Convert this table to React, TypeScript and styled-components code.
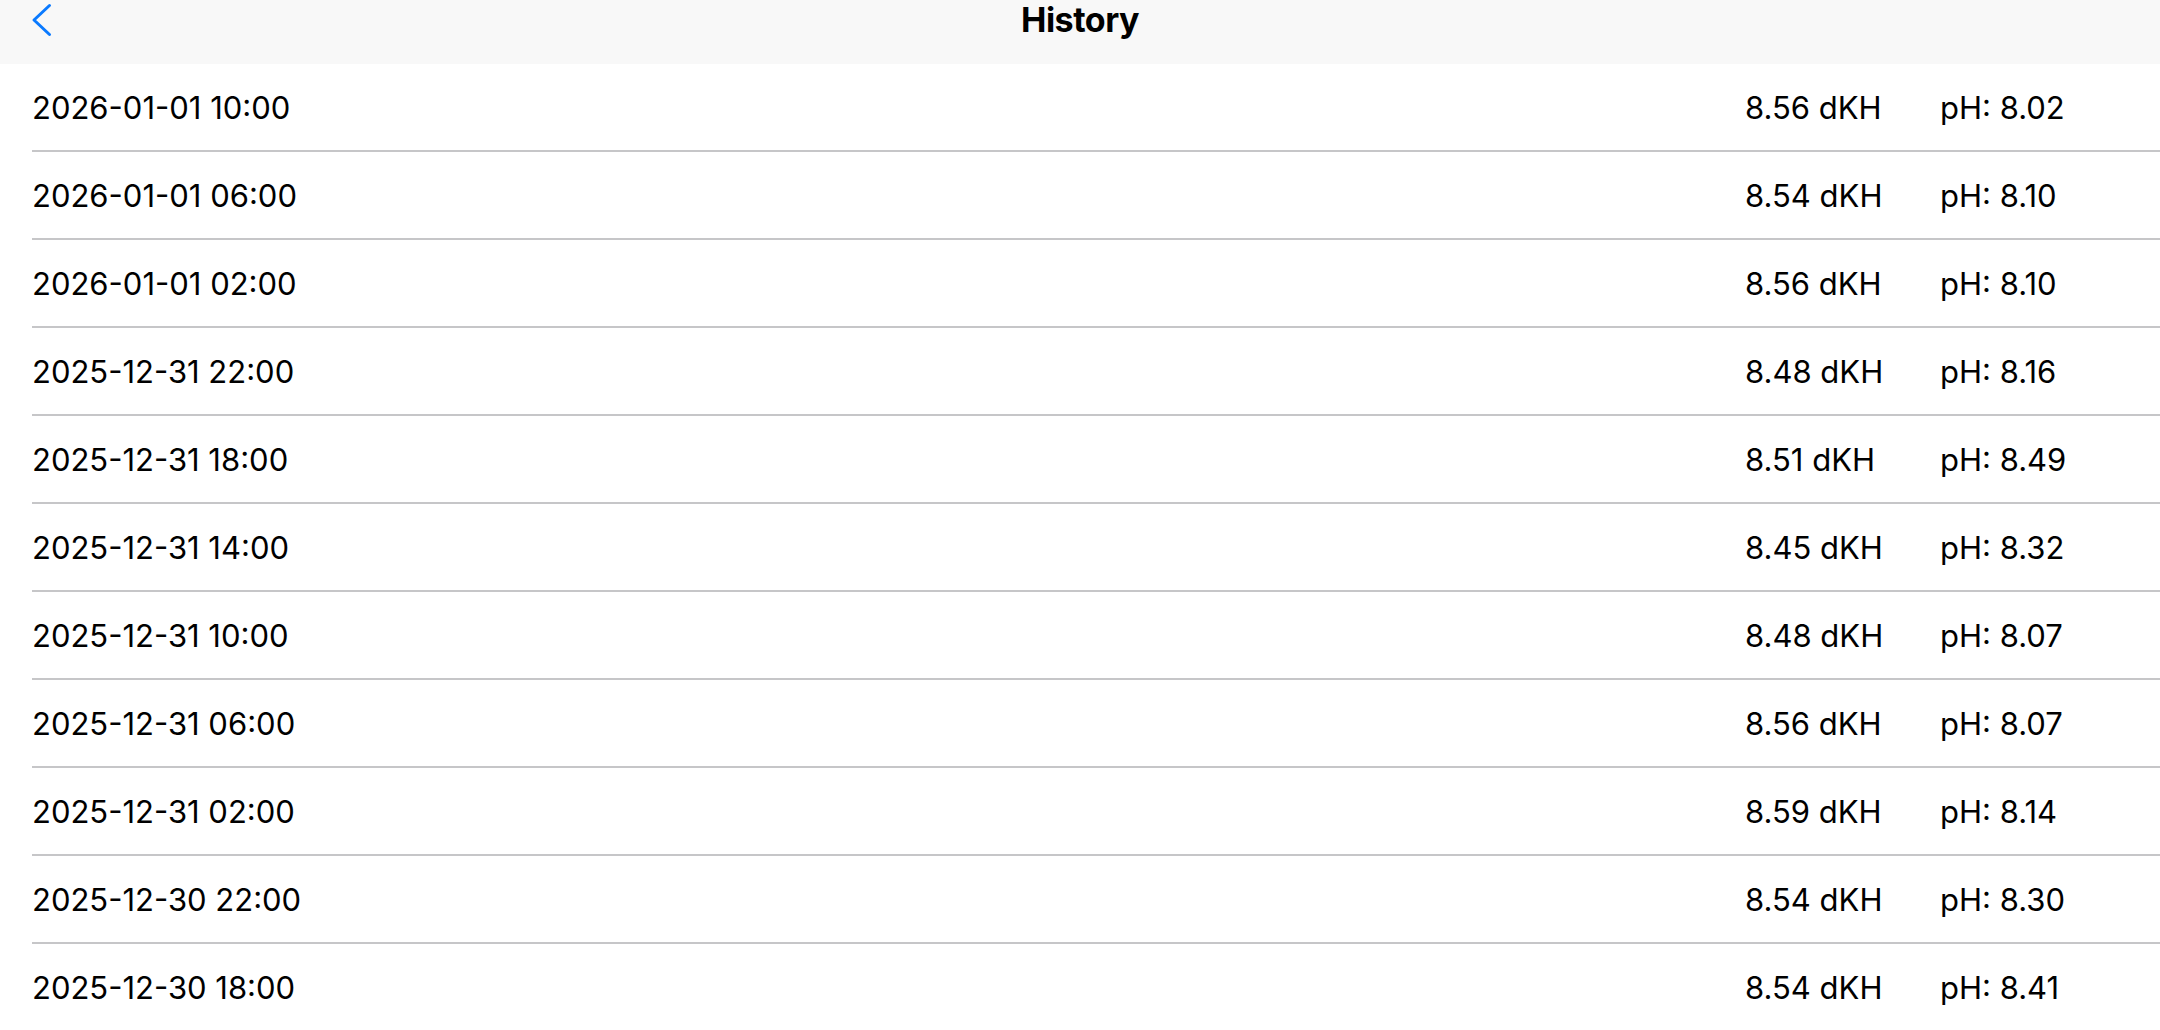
import React from "react";
import styled, { createGlobalStyle } from "styled-components";

const GlobalStyle = createGlobalStyle`
  html, body {
    margin: 0;
    padding: 0;
    background: #ffffff;
  }
  body {
    font-family: Inter, "Liberation Sans", sans-serif;
    color: #000000;
    -webkit-font-smoothing: antialiased;
  }
`;

const Page = styled.div`
  width: 100%;
  min-height: 100vh;
  background: #ffffff;
  overflow: hidden;
`;

const NavBar = styled.header`
  display: grid;
  grid-template-columns: 1fr auto 1fr;
  align-items: start;
  height: 64px;
  background: #f8f8f8;
`;

const BackButton = styled.button`
  justify-self: start;
  display: flex;
  align-items: center;
  margin: 3px 0 0 31px;
  padding: 0;
  border: none;
  background: none;
  color: #0a7aff;
  cursor: pointer;
`;

const Title = styled.h1`
  margin: 0;
  padding-top: 0;
  font-size: 34px;
  line-height: 40px;
  font-weight: 700;
  letter-spacing: -0.5px;
`;

const List = styled.ul`
  list-style: none;
  margin: 0;
  padding: 0;
`;

const Row = styled.li`
  display: grid;
  grid-template-columns: 1fr 195px 220px;
  align-items: center;
  height: 86px;
  margin-left: 32px;
  border-bottom: 2px solid #c6c6c8;
  font-size: 31px;
  line-height: 36px;
`;

const Cell = styled.span`
  white-space: nowrap;
  padding-top: 2px;
`;

type Reading = {
  time: string;
  dkh: string;
  ph: string;
};

const readings: Reading[] = [
  { time: "2026-01-01 10:00", dkh: "8.56", ph: "8.02" },
  { time: "2026-01-01 06:00", dkh: "8.54", ph: "8.10" },
  { time: "2026-01-01 02:00", dkh: "8.56", ph: "8.10" },
  { time: "2025-12-31 22:00", dkh: "8.48", ph: "8.16" },
  { time: "2025-12-31 18:00", dkh: "8.51", ph: "8.49" },
  { time: "2025-12-31 14:00", dkh: "8.45", ph: "8.32" },
  { time: "2025-12-31 10:00", dkh: "8.48", ph: "8.07" },
  { time: "2025-12-31 06:00", dkh: "8.56", ph: "8.07" },
  { time: "2025-12-31 02:00", dkh: "8.59", ph: "8.14" },
  { time: "2025-12-30 22:00", dkh: "8.54", ph: "8.30" },
  { time: "2025-12-30 18:00", dkh: "8.54", ph: "8.41" },
];

const ChevronLeft = () => (
  <svg width="21" height="34" viewBox="0 0 21 34" fill="none">
    <path
      d="M18.5 2.5 L3 17 L18.5 31.5"
      stroke="currentColor"
      strokeWidth="3"
      strokeLinecap="round"
      strokeLinejoin="round"
    />
  </svg>
);

export default function App() {
  return (
    <Page>
      <GlobalStyle />
      <NavBar>
        <BackButton aria-label="Back">
          <ChevronLeft />
        </BackButton>
        <Title>History</Title>
        <div />
      </NavBar>

      <List>
        {readings.map((r) => (
          <Row key={r.time}>
            <Cell>{r.time}</Cell>
            <Cell>{r.dkh} dKH</Cell>
            <Cell>pH: {r.ph}</Cell>
          </Row>
        ))}
      </List>
    </Page>
  );
}
